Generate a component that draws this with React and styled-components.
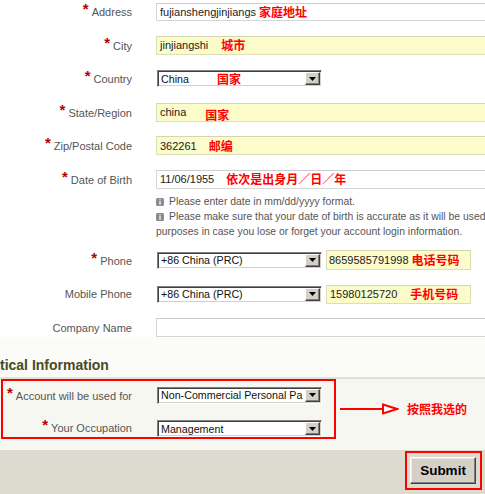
import React from "react";
import styled, { createGlobalStyle } from "styled-components";

const GlobalStyle = createGlobalStyle`
  html, body {
    margin: 0;
    padding: 0;
    background: #ffffff;
  }
  body {
    font-family: "Liberation Sans", Arial, sans-serif;
    overflow: hidden;
  }
`;

const Page = styled.div`
  width: 485px;
  height: 494px;
  overflow: hidden;
  display: flex;
  flex-direction: column;
  font-family: "Liberation Sans", Arial, sans-serif;
  font-size: 11px;
  color: #555;
`;

const Form = styled.div`
  display: flex;
  flex-direction: column;
  margin-top: -5px;
  background: #ffffff;
`;

const Row = styled.div`
  display: grid;
  grid-template-columns: ${(p) => p.$labelWidth ?? 132}px 1fr;
  column-gap: 24px;
  align-items: ${(p) => p.$align ?? "center"};
  height: ${(p) => p.$h ?? 33.5}px;
`;

const Label = styled.div`
  text-align: right;
  white-space: nowrap;
  line-height: 17px;
  color: #555;
`;

const Star = styled.span`
  color: #b30000;
  font-weight: bold;
  font-size: 15px;
  position: relative;
  top: -2px;
  margin-right: 3px;
`;

const Field = styled.div`
  display: flex;
  align-items: center;
  gap: 4px;
`;

const TextBox = styled.div`
  box-sizing: border-box;
  flex: none;
  display: flex;
  align-items: center;
  width: ${(p) => p.$w ?? 340}px;
  height: ${(p) => p.$h ?? 18}px;
  padding-left: ${(p) => p.$pad ?? 3}px;
  background: ${(p) => (p.$tone === "yellow" ? "#fcfccb" : "#ffffff")};
  border: 1px solid ${(p) => (p.$tone === "yellow" ? "#deddb9" : "#d6d6d6")};
  border-top-color: ${(p) => (p.$tone === "yellow" ? "#d6d5b0" : "#cdcdcd")};
  color: #222;
  white-space: nowrap;
`;

const SelectBox = styled.div`
  box-sizing: border-box;
  flex: none;
  width: 165px;
  height: 17px;
  margin-left: 1px;
  display: flex;
  align-items: center;
  background: #ffffff;
  border-top: 1px solid #808080;
  border-left: 1px solid #808080;
  border-bottom: 1px solid #ffffff;
  border-right: 1px solid #ffffff;
  box-shadow: inset 1px 1px 0 #404040, inset -1px -1px 0 #d4d0c8;
  padding: 0 1px 0 3px;
  font-size: 10.7px;
  color: #111;
`;

const SelectValue = styled.span`
  flex: 1;
  min-width: 0;
  display: flex;
  align-items: center;
  white-space: nowrap;
`;

const DropButton = styled.span`
  box-sizing: border-box;
  flex: none;
  position: relative;
  width: 15px;
  height: 13px;
  background: #d4d0c8;
  border-top: 1px solid #ffffff;
  border-left: 1px solid #ffffff;
  border-right: 1px solid #404040;
  border-bottom: 1px solid #404040;
  box-shadow: inset -1px -1px 0 #808080;
  display: flex;
  align-items: center;
  justify-content: center;
`;

const Note = styled.span`
  color: #ff0000;
  font-family: "Noto Sans CJK SC", "Liberation Sans", sans-serif;
  font-weight: 700;
  font-size: 12px;
  line-height: 14px;
  margin-left: ${(p) => p.$gap ?? 4}px;
  position: relative;
  top: ${(p) => p.$dy ?? 0}px;
  white-space: nowrap;
`;

const InfoBlock = styled.div`
  margin: -2px 0 4px 156px;
  font-size: 10.4px;
  line-height: 15px;
  color: #555;
  white-space: nowrap;
`;

const InfoLine = styled.div`
  display: flex;
  align-items: center;
  gap: 5px;

  svg {
    flex: none;
  }
`;

const Section = styled.section`
  display: flex;
  flex-direction: column;
  background: #f7f7f1;
`;

const SectionTitle = styled.h2`
  margin: 0;
  padding: 20px 0 4px;
  font: bold 14px/16px "Liberation Sans", Arial, sans-serif;
  color: #4a4a22;
  background: #fbfbf8;
  border-bottom: 2px solid #e2e1d6;
  white-space: nowrap;
`;

const SectionBody = styled.div`
  display: flex;
  align-items: center;
  padding: 0 0 11px 1px;
`;

const Highlight = styled.div`
  box-sizing: border-box;
  width: 335px;
  height: 60px;
  border: 2px solid #ff0000;
  display: flex;
  flex-direction: column;
`;

const Callout = styled.div`
  display: flex;
  align-items: center;
  margin-left: 3px;
`;

const Footer = styled.footer`
  flex: 1;
  background: #dddbd0;
  display: flex;
  justify-content: flex-end;
  align-items: flex-start;
  padding: 1px 3px 0 0;
`;

const SubmitFrame = styled.div`
  border: 2px solid #ff0000;
  padding: 4px 4px 4px 3px;
  display: flex;
`;

const SubmitButton = styled.button`
  box-sizing: border-box;
  width: 66px;
  height: 27px;
  padding: 0;
  background: #d4d0c8;
  border-top: 1px solid #ffffff;
  border-left: 1px solid #ffffff;
  border-right: 1px solid #404040;
  border-bottom: 1px solid #404040;
  box-shadow: inset -1px -1px 0 #808080, inset 1px 1px 0 #ebe9e4;
  font: bold 13.5px "Liberation Sans", Arial, sans-serif;
  color: #000;
`;

const DownArrow = () => (
  <svg width="7" height="4" viewBox="0 0 7 4">
    <polygon points="0,0 7,0 3.5,4" fill="#000" />
  </svg>
);

const InfoIcon = () => (
  <svg width="8" height="8" viewBox="0 0 8 8">
    <rect x="0" y="0" width="8" height="8" rx="1.5" fill="#8a8a8a" />
    <rect x="3.4" y="1.2" width="1.2" height="1.2" fill="#fff" />
    <rect x="3.4" y="3" width="1.2" height="3.8" fill="#fff" />
  </svg>
);

const CalloutArrow = () => (
  <svg width="60" height="14" viewBox="0 0 60 14">
    <line x1="1" y1="7" x2="44" y2="7" stroke="#ff0000" strokeWidth="2" />
    <polygon
      points="44,2.5 58,7 44,11.5"
      fill="#ffffff"
      stroke="#ff0000"
      strokeWidth="2"
      strokeLinejoin="miter"
    />
  </svg>
);

const FieldLabel = ({ required, children }) => (
  <Label>
    {required && <Star>*</Star>}
    {children}
  </Label>
);

const Select = ({ children }) => (
  <SelectBox>
    <SelectValue>{children}</SelectValue>
    <DropButton>
      <DownArrow />
    </DropButton>
  </SelectBox>
);

export default function App() {
  return (
    <>
      <GlobalStyle />
      <Page>
        <Form>
          <Row>
            <FieldLabel required>Address</FieldLabel>
            <Field>
              <TextBox>
                fujianshengjinjiangs<Note $gap={3}>家庭地址</Note>
              </TextBox>
            </Field>
          </Row>
          <Row>
            <FieldLabel required>City</FieldLabel>
            <Field>
              <TextBox $tone="yellow" $h={19}>
                jinjiangshi<Note $gap={13}>城市</Note>
              </TextBox>
            </Field>
          </Row>
          <Row>
            <FieldLabel required>Country</FieldLabel>
            <Field>
              <Select>
                China<Note $gap={28}>国家</Note>
              </Select>
            </Field>
          </Row>
          <Row>
            <FieldLabel required>State/Region</FieldLabel>
            <Field>
              <TextBox $tone="yellow" $h={19}>
                china<Note $gap={19} $dy={3}>国家</Note>
              </TextBox>
            </Field>
          </Row>
          <Row>
            <FieldLabel required>Zip/Postal Code</FieldLabel>
            <Field>
              <TextBox $tone="yellow" $h={19}>
                362261<Note $gap={12}>邮编</Note>
              </TextBox>
            </Field>
          </Row>
          <Row>
            <FieldLabel required>Date of Birth</FieldLabel>
            <Field>
              <TextBox $h={19}>
                11/06/1955<Note $gap={12}>依次是出身月／日／年</Note>
              </TextBox>
            </Field>
          </Row>

          <InfoBlock>
            <InfoLine>
              <InfoIcon />
              Please enter date in mm/dd/yyyy format.
            </InfoLine>
            <InfoLine>
              <InfoIcon />
              Please make sure that your date of birth is accurate as it will be used
            </InfoLine>
            <div>purposes in case you lose or forget your account login information.</div>
          </InfoBlock>

          <Row $h={34}>
            <FieldLabel required>Phone</FieldLabel>
            <Field>
              <Select>+86 China (PRC)</Select>
              <TextBox $tone="yellow" $w={145} $h={20} $pad={2}>
                8659585791998<Note $gap={3}>电话号码</Note>
              </TextBox>
            </Field>
          </Row>
          <Row $h={34}>
            <FieldLabel>Mobile Phone</FieldLabel>
            <Field>
              <Select>+86 China (PRC)</Select>
              <TextBox $tone="yellow" $w={145} $h={19} $pad={3}>
                15980125720<Note $gap={13}>手机号码</Note>
              </TextBox>
            </Field>
          </Row>
          <Row $h={26} $align="end">
            <FieldLabel>Company Name</FieldLabel>
            <Field>
              <TextBox $h={19} />
            </Field>
          </Row>
        </Form>

        <Section>
          <SectionTitle>tical Information</SectionTitle>
          <SectionBody>
            <Highlight>
              <Row $labelWidth={129} $h={28}>
                <FieldLabel required>Account will be used for</FieldLabel>
                <Field>
                  <Select>Non-Commercial Personal Pa</Select>
                </Field>
              </Row>
              <Row $labelWidth={129} $h={28} $align="end">
                <FieldLabel required>Your Occupation</FieldLabel>
                <Field>
                  <Select>Management</Select>
                </Field>
              </Row>
            </Highlight>
            <Callout>
              <CalloutArrow />
              <Note $gap={8}>按照我选的</Note>
            </Callout>
          </SectionBody>
        </Section>

        <Footer>
          <SubmitFrame>
            <SubmitButton type="button">Submit</SubmitButton>
          </SubmitFrame>
        </Footer>
      </Page>
    </>
  );
}
